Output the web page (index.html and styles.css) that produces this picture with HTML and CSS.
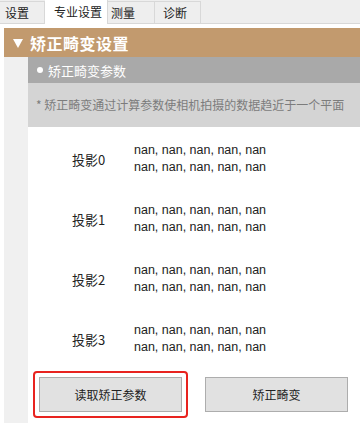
FILE: index.html
```html
<!DOCTYPE html>
<html lang="zh">
<head>
  <meta charset="UTF-8" />
  <meta name="viewport" content="width=device-width, initial-scale=1.0"/>
  <title>专业设置</title>
  <link rel="stylesheet" href="styles.css">
</head>
<body>
  <div class="tabs">
    <div class="tab tab-1">设置</div>
    <div class="tab tab-2 active">专业设置</div>
    <div class="tab tab-3">测量</div>
    <div class="tab tab-4">诊断</div>
  </div>

  <div class="panel">
    <div class="panel-title"><span class="arrow"></span>矫正畸变设置</div>
    <div class="panel-body">
      <div class="content">
        <div class="sub-title"><span class="dot"></span>矫正畸变参数</div>
        <div class="note">* 矫正畸变通过计算参数使相机拍摄的数据趋近于一个平面</div>

        <div class="rows">
          <div class="row">
            <div class="label">投影0</div>
            <div class="values">
              <div>nan, nan, nan, nan, nan</div>
              <div>nan, nan, nan, nan, nan</div>
            </div>
          </div>
          <div class="row">
            <div class="label">投影1</div>
            <div class="values">
              <div>nan, nan, nan, nan, nan</div>
              <div>nan, nan, nan, nan, nan</div>
            </div>
          </div>
          <div class="row">
            <div class="label">投影2</div>
            <div class="values">
              <div>nan, nan, nan, nan, nan</div>
              <div>nan, nan, nan, nan, nan</div>
            </div>
          </div>
          <div class="row">
            <div class="label">投影3</div>
            <div class="values">
              <div>nan, nan, nan, nan, nan</div>
              <div>nan, nan, nan, nan, nan</div>
            </div>
          </div>
        </div>

        <div class="actions">
          <div class="highlight">
            <button class="btn">读取矫正参数</button>
          </div>
          <button class="btn">矫正畸变</button>
        </div>
      </div>
    </div>
  </div>
</body>
</html>
```

FILE: styles.css
```css
body {
  margin: 0;
  font-family: "Noto Sans CJK SC", "Liberation Sans", sans-serif;
  color: #222;
  background-color: #ffffff;
}

.tabs {
  display: flex;
  height: 23px;
  background-color: #eeeeee;
  border-bottom: 1px solid #d8d8d8;
}
.tab {
  box-sizing: border-box;
  height: 23px;
  margin-top: 1px;
  padding-left: 5px;
  border-top: 1px solid #d8d8d8;
  border-right: 1px solid #d8d8d8;
  font-size: 12px;
  line-height: 21px;
}
.tab-1 { width: 45px; }
.tab-2 { width: 63px; padding-left: 9px; }
.tab-3 { width: 47px; padding-left: 3px; }
.tab-4 { width: 46px; padding-left: 8px; }
.tab.active {
  background-color: #ffffff;
  height: 24px;
  margin-top: 0;
  border-top: none;
  line-height: 23px;
  margin-bottom: -1px;
}

.panel {
  margin: 4px 0 0 4px;
}
.panel-title {
  display: flex;
  align-items: center;
  height: 29px;
  padding-left: 9px;
  background-color: #c29a6e;
  color: #ffffff;
  font-size: 16px;
  font-weight: bold;
  letter-spacing: 0.5px;
}
.arrow {
  width: 0;
  height: 0;
  border-left: 5.5px solid transparent;
  border-right: 5.5px solid transparent;
  border-top: 9px solid #ffffff;
  margin-right: 7px;
  margin-top: 1px;
}
.panel-body {
  background-color: #f0f0f0;
  padding-left: 24px;
  min-height: 366px;
}
.content {
  background-color: #ffffff;
  min-height: 366px;
}

.sub-title {
  display: flex;
  align-items: center;
  height: 26px;
  padding-left: 9px;
  background-color: #a9a9a9;
  color: #ffffff;
  font-size: 13px;
}
.dot {
  width: 6px;
  height: 6px;
  border-radius: 50%;
  background-color: #ffffff;
  margin-right: 5px;
}
.note {
  height: 44px;
  line-height: 44px;
  padding-left: 8px;
  background-color: #d4d4d4;
  color: #7c7c7c;
  font-size: 12px;
}

.rows {
  padding-top: 15px;
}
.row {
  display: flex;
  align-items: center;
  height: 34px;
  margin-bottom: 26px;
}
.row:last-child {
  margin-bottom: 0;
}
.label {
  width: 62px;
  padding-left: 44px;
  font-size: 13px;
}
.values {
  font-family: "Liberation Sans", sans-serif;
  font-size: 12.5px;
  line-height: 17px;
}

.actions {
  display: flex;
  align-items: center;
  gap: 17px;
  margin-top: 15px;
  padding-left: 5px;
}
.highlight {
  padding: 4px;
  border: 2px solid #e8231f;
  border-radius: 4px;
}
.btn {
  display: block;
  width: 143px;
  height: 35px;
  background-color: #e1e1e1;
  border: 1px solid #adadad;
  font-family: "Noto Sans CJK SC", sans-serif;
  font-size: 12px;
  color: #222;
  padding: 0;
}
```
